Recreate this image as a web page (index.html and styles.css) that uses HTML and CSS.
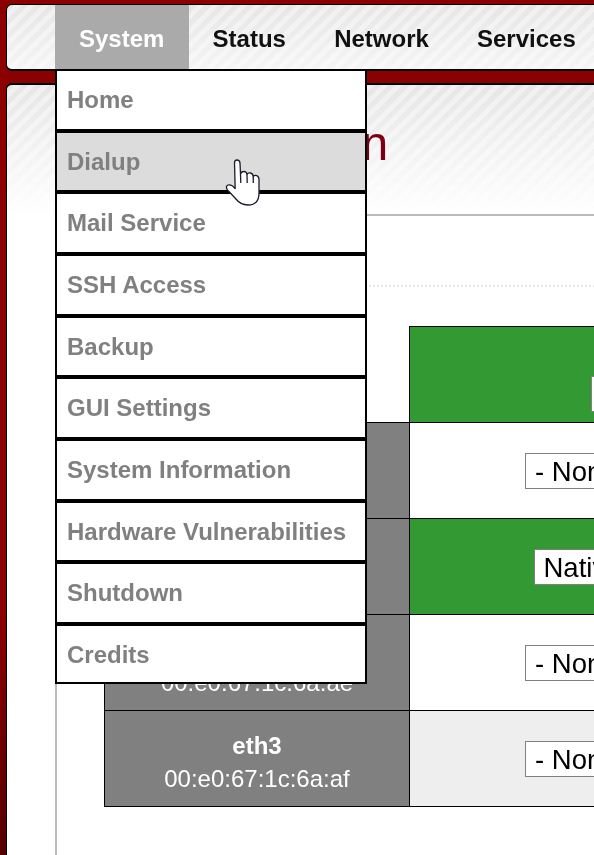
FILE: index.html
```html
<!DOCTYPE html>
<html lang="en">
<head>
    <meta charset="UTF-8">
    <meta name="viewport" content="width=device-width, initial-scale=1.0">
    <title>Zone Allocation</title>
    <link rel="stylesheet" href="styles.css">
</head>
<body>
    <div class="page">
        <nav class="topnav">
            <div class="tab active">
                <a href="#">System</a>
                <ul class="dropdown">
                    <li><a href="#">Home</a></li>
                    <li class="hover"><a href="#">Dialup</a></li>
                    <li><a href="#">Mail Service</a></li>
                    <li><a href="#">SSH Access</a></li>
                    <li><a href="#">Backup</a></li>
                    <li><a href="#">GUI Settings</a></li>
                    <li><a href="#">System Information</a></li>
                    <li><a href="#">Hardware Vulnerabilities</a></li>
                    <li><a href="#">Shutdown</a></li>
                    <li><a href="#">Credits</a></li>
                </ul>
            </div>
            <div class="tab"><a href="#">Status</a></div>
            <div class="tab"><a href="#">Network</a></div>
            <div class="tab"><a href="#">Services</a></div>
        </nav>

        <div class="content">
            <main class="main">
                <h1>Zone Allocation</h1>
                <div class="dots"></div>
                <table class="zones">
                    <tr>
                        <th class="blank"></th>
                        <td class="green head"><span class="box narrow"></span></td>
                    </tr>
                    <tr>
                        <th><b>eth0</b><br>00:e0:67:1c:6a:ac</th>
                        <td><span class="box">- None -</span></td>
                    </tr>
                    <tr>
                        <th><b>eth1</b><br>00:e0:67:1c:6a:ad</th>
                        <td class="green"><span class="box native">Native</span></td>
                    </tr>
                    <tr>
                        <th><b>eth2</b><br>00:e0:67:1c:6a:ae</th>
                        <td><span class="box">- None -</span></td>
                    </tr>
                    <tr>
                        <th><b>eth3</b><br>00:e0:67:1c:6a:af</th>
                        <td class="alt"><span class="box">- None -</span></td>
                    </tr>
                </table>
            </main>
        </div>
    </div>

    <!-- mouse pointer over the Dialup item -->
    <svg class="pointer" viewBox="224 158 38 50" width="38" height="50">
        <path d="M234.5 163 Q234.5 160 237 160 Q239.7 160 240 163 L240.5 174 Q241 171.5 244 171.5 Q246.5 171.5 247 174.5 Q248 172.5 250.5 173 Q253 173.5 253.2 176.5 Q254.5 174.8 256.8 175.6 Q259 176.5 259 179.5 L259 193 Q259 205 248 205 Q240.5 205 235.5 198.5 L227.5 190 Q225 186.5 228 185 Q231.5 184 235.2 188.5 Z" fill="#fff" stroke="#1c1c2c" stroke-width="1.3" stroke-linejoin="round"/>
        <path d="M240.5 174 L240.8 183 M247 174.5 L247.2 183 M253.2 176.5 L253.3 183" fill="none" stroke="#1c1c2c" stroke-width="1.3"/>
    </svg>
</body>
</html>
```

FILE: styles.css
```css
html, body {
    margin: 0;
    padding: 0;
    height: 855px;
    overflow: hidden;
}

body {
    font-family: "Liberation Sans", Arial, sans-serif;
    font-size: 24px;
    background: linear-gradient(to bottom, #8b0000 0%, #8b0000 72%, #560000 100%);
    position: relative;
}

.page {
    width: 1100px;
    padding: 4px 0 0 6px;
    box-sizing: border-box;
    will-change: transform;
}

.topnav {
    display: flex;
    height: 64px;
    padding-left: 48px;
    border: 1px solid #000;
    border-bottom-width: 2px;
    border-radius: 6px;
    background:
        linear-gradient(to bottom, rgba(255, 255, 255, 0) 0%, rgba(255, 255, 255, 0.6) 100%),
        repeating-linear-gradient(135deg, #e6e6e6 0, #e6e6e6 5px, #f0f0f0 5px, #f0f0f0 10px);
}

.tab {
    position: relative;
}

.tab > a {
    display: block;
    height: 62px;
    padding: 2px 24.2px 0 24px;
    line-height: 64px;
    font-weight: bold;
    color: #111;
    text-decoration: none;
}

.tab.active > a {
    background: #aaa;
    color: #fff;
}

.dropdown {
    position: absolute;
    top: 64px;
    left: 0;
    z-index: 5;
    width: 312px;
    box-sizing: border-box;
    margin: 0;
    padding: 0;
    list-style: none;
    background: #fff;
}

.dropdown li {
    border: 2px solid #000;
    height: 57.67px;
    background: #fff;
}

.dropdown li:last-child {
    height: 56.5px;
}

.dropdown li.hover {
    background: #dcdcdc;
}

.dropdown a {
    display: block;
    padding-left: 10px;
    line-height: 57.67px;
    font-weight: bold;
    color: #808080;
    text-decoration: none;
}

.content {
    margin-top: 12px;
    height: 800px;
    padding-left: 48px;
    border: 1px solid #000;
    border-top-width: 2px;
    border-radius: 6px 6px 0 0;
    background:
        linear-gradient(to bottom, rgba(255, 255, 255, 0) 0, #fff 130px),
        repeating-linear-gradient(135deg, #e6e6e6 0, #e6e6e6 5px, #f0f0f0 5px, #f0f0f0 10px);
}

.main {
    height: 100%;
    border-left: 2px solid #bbb;
}

h1 {
    margin: 0;
    padding: 31px 0 42px 3px;
    font-size: 48px;
    line-height: 56px;
    font-weight: normal;
    color: #7b0013;
    border-bottom: 2px solid #bbb;
}

.dots {
    margin-top: 69px;
    border-top: 2px dotted #e6e6e6;
}

.zones {
    margin: 39px 0 0 47px;
    border-collapse: collapse;
    color: #fff;
}

.zones th,
.zones td {
    height: 95px;
    padding: 0;
    border: 1px solid #000;
    text-align: center;
}

.zones th {
    width: 304px;
    height: 89px;
    padding-top: 6px;
    background: #808080;
    font-weight: normal;
    line-height: 33px;
}

.zones th.blank {
    background: none;
    border: none;
}

.zones td {
    width: 382px;
    background: #fff;
}

.zones td.green {
    background: #339933;
}

.zones td.alt {
    background: #eee;
}

.zones td.head {
    padding-top: 38px;
    height: 57px;
}

.box {
    display: inline-block;
    box-sizing: border-box;
    width: 152px;
    height: 36px;
    padding-left: 9px;
    border: 1px solid #808080;
    background: #fff;
    color: #000;
    font-size: 27.5px;
    line-height: 36px;
    text-align: left;
    vertical-align: middle;
}

.box.native {
    width: 135px;
}

.box.narrow {
    width: 20px;
    padding: 0;
}

.pointer {
    position: absolute;
    left: 224px;
    top: 158px;
    z-index: 10;
}
```
